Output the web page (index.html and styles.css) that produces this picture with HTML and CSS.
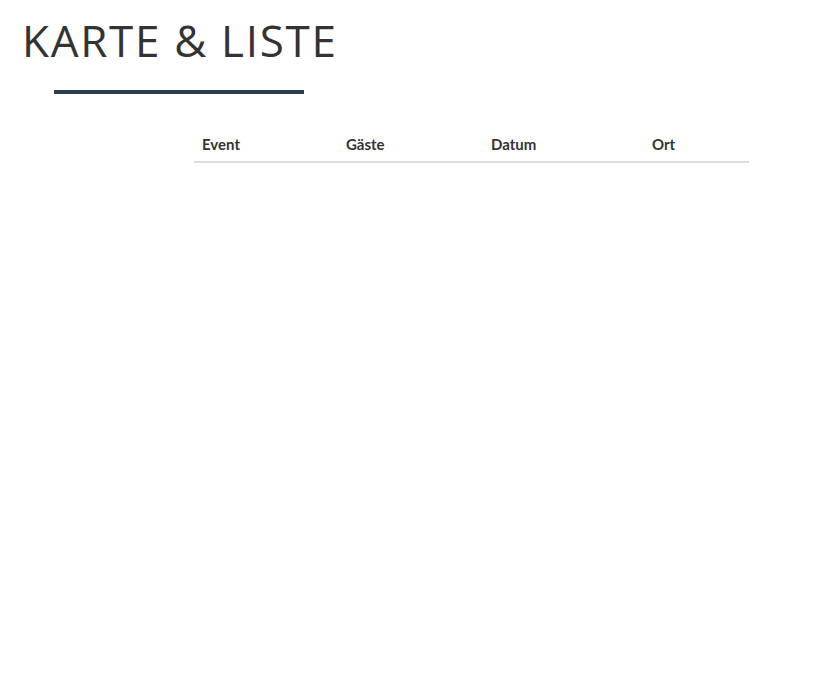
FILE: index.html
```html
<!DOCTYPE html>
<html lang="de">
<head>
<meta charset="utf-8">
<title>Karte &amp; Liste</title>
<link rel="stylesheet" href="styles.css">
</head>
<body>
<header class="page-head">
  <h1 class="title">KARTE &amp; LISTE</h1>
  <div class="title-bar"></div>
</header>
<main class="content">
  <table class="events">
    <thead>
      <tr>
        <th class="c-event">Event</th>
        <th class="c-guests">Gäste</th>
        <th class="c-date">Datum</th>
        <th class="c-place">Ort</th>
      </tr>
    </thead>
    <tbody></tbody>
  </table>
</main>
</body>
</html>
```
FILE: styles.css
```css
* { box-sizing: border-box; }
html, body { margin: 0; padding: 0; background: #fff; }
body { font-family: Lato, "Open Sans", sans-serif; color: #333; }

.page-head { padding: 15px 0 0 22px; }
.title {
  margin: 0;
  font-family: "Open Sans", "Noto Sans", sans-serif;
  font-weight: 400;
  font-size: 44px;
  line-height: 50px;
  letter-spacing: 1.7px;
  color: #333;
}
.title-bar {
  margin: 25px 0 0 32px;
  width: 250px;
  height: 4px;
  background: #2c3e50;
}

.content { padding: 35px 0 0 194px; }
.events {
  width: 555px;
  border-collapse: collapse;
}
.events th {
  text-align: left;
  font-weight: 700;
  font-size: 15px;
  padding: 7px 8px 8px 8px;
  line-height: 17px;
  border-bottom: 2px solid #ddd;
  color: #333;
}
.c-event { width: 144px; }
.c-guests { width: 145px; }
.c-date { width: 161px; }
.c-place { width: 105px; }
```
